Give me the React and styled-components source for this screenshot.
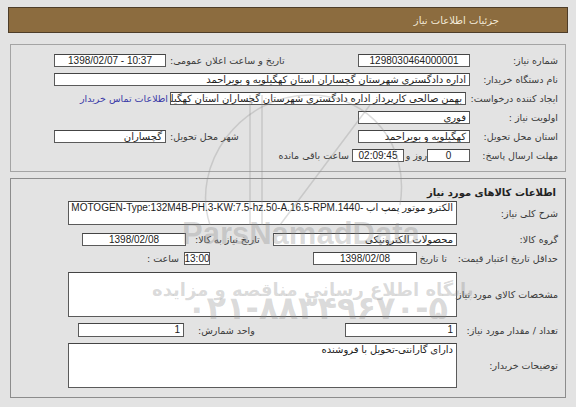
import styled, { createGlobalStyle } from "styled-components";

const GlobalStyle = createGlobalStyle`
  html, body {
    margin: 0;
    padding: 0;
    background: #e3e3e3;
  }
  body {
    font-family: "Liberation Sans", "DejaVu Sans", sans-serif;
    font-size: 10px;
    color: #333;
  }
`;

const Page = styled.div`
  position: relative;
  width: 576px;
  height: 407px;
  padding: 7px 8px 0 8px;
  box-sizing: border-box;
  direction: rtl;
  overflow: hidden;
`;

const Header = styled.div`
  height: 26px;
  box-sizing: border-box;
  background: #8c6c3f;
  border: 1px solid #4d3d29;
  color: #f3ead8;
  font-family: "DejaVu Sans", sans-serif;
  font-size: 10px;
  display: flex;
  align-items: center;
  padding-right: 68px;
`;

const Panel = styled.div`
  margin: ${(p) => p.$top}px 2px 0 2px;
  border: 1px solid ${(p) => p.$border || "#a4a4a4"};
  padding: ${(p) => p.$pad};
  display: flex;
  flex-direction: column;
  gap: ${(p) => p.$gap || 0}px;
`;

const Row = styled.div`
  display: flex;
  align-items: center;
  height: ${(p) => p.$h || 13}px;
  margin-top: ${(p) => p.$mt || 0}px;
`;

const Label = styled.div`
  width: ${(p) => (p.$w ? p.$w + "px" : "auto")};
  flex: ${(p) => (p.$grow ? 1 : "none")};
  text-align: ${(p) => (p.$end ? "left" : "right")};
  padding-left: ${(p) => p.$pl || 0}px;
  margin-right: ${(p) => p.$mr || 0}px;
  box-sizing: border-box;
  white-space: nowrap;
  font-family: "DejaVu Sans", sans-serif;
  font-size: 9.5px;
  color: #3a3a3a;
`;

const Field = styled.div`
  width: ${(p) => (p.$w ? p.$w + "px" : "auto")};
  flex: ${(p) => (p.$grow ? 1 : "none")};
  height: ${(p) => p.$h || 13}px;
  margin-right: ${(p) => p.$mr || 0}px;
  box-sizing: border-box;
  background: #fff;
  border: 1px solid #5a5a5a;
  border-top-color: #444;
  padding: 0 3px;
  display: flex;
  direction: ${(p) => (p.$ltr ? "ltr" : "rtl")};
  align-items: ${(p) => (p.$top ? "flex-start" : "center")};
  justify-content: ${(p) => (p.$center ? "center" : "flex-start")};
  white-space: nowrap;
  overflow: hidden;
  font-size: 10px;
  line-height: 12px;
  color: #222;
`;

const Spacer = styled.div`
  width: ${(p) => p.$w}px;
  flex: none;
`;

const Link = styled.a`
  margin-right: 2px;
  color: #3b3ba8;
  font-family: "DejaVu Sans", sans-serif;
  font-size: 9.5px;
  white-space: nowrap;
  text-decoration: none;
`;

const Heading = styled.div`
  height: 14px;
  display: flex;
  align-items: center;
  font-family: "DejaVu Sans", sans-serif;
  font-weight: bold;
  font-size: 10px;
  color: #222;
  margin-right: 2px;
`;

const Watermark = styled.div`
  position: absolute;
  inset: 0;
  pointer-events: none;
  direction: ltr;
`;

const MarkText = styled.div`
  position: absolute;
  left: ${(p) => p.$x}px;
  top: ${(p) => p.$y}px;
  font-family: ${(p) => p.$font || '"DejaVu Sans", sans-serif'};
  font-weight: bold;
  font-size: ${(p) => p.$size}px;
  letter-spacing: ${(p) => p.$ls || 0}px;
  color: rgba(140, 140, 140, 0.32);
  white-space: nowrap;
  direction: ${(p) => p.$dir || "ltr"};
`;

const Logo = styled.svg`
  position: absolute;
  left: 150px;
  top: 75px;
`;

export default function App() {
  return (
    <Page>
      <GlobalStyle />
      <Header>جزئیات اطلاعات نیاز</Header>

      <Panel $top={11} $pad="9px 7px 9px 43px" $gap={6}>
        <Row>
          <Label $w={88}>شماره نیاز:</Label>
          <Field $w={112} $center>1298030464000001</Field>
          <Label $grow $end $pl={4}>تاریخ و ساعت اعلان عمومی:</Label>
          <Field $w={112} $center $ltr>1398/02/07 - 10:37</Field>
        </Row>
        <Row>
          <Label $w={88}>نام دستگاه خریدار:</Label>
          <Field $grow>اداره دادگستری شهرستان گچساران استان کهگیلویه و بویراحمد</Field>
        </Row>
        <Row>
          <Label $w={92}>ایجاد کننده درخواست:</Label>
          <Field $w={296}>بهمن صالحی کارپرداز اداره دادگستری شهرستان گچساران استان کهگیلویه و بو</Field>
          <Link>اطلاعات تماس خریدار</Link>
        </Row>
        <Row>
          <Label $w={88}>اولویت نیاز :</Label>
          <Field $w={112}>فوری</Field>
        </Row>
        <Row>
          <Label $w={88}>استان محل تحویل:</Label>
          <Field $w={112}>کهگیلویه و بویراحمد</Field>
          <Label $grow $end $pl={4}>شهر محل تحویل:</Label>
          <Field $w={112}>گچساران</Field>
        </Row>
        <Row>
          <Label $w={88}>مهلت ارسال پاسخ:</Label>
          <Field $w={43} $center>0</Field>
          <Label $w={23}>روز و</Label>
          <Field $w={52} $center>02:09:45</Field>
          <Label $mr={3}>ساعت باقی مانده</Label>
        </Row>
      </Panel>

      <Panel $top={6} $border="#8c8c8c" $pad="6px 7px 9px 57px">
        <Heading>اطلاعات کالاهای مورد نیاز</Heading>
        <Row $h={24} $mt={2}>
          <Label $w={101}>شرح کلی نیاز:</Label>
          <Field $grow $h={24} $top>الکترو موتور پمپ اب -MOTOGEN-Type:132M4B-PH.3-KW:7.5-hz.50-A.16.5-RPM.1440</Field>
        </Row>
        <Row $mt={8}>
          <Label $w={101}>گروه کالا:</Label>
          <Field $w={184}>محصولات الکترونیکی</Field>
          <Label $w={87} $end $pl={9}>تاریخ نیاز به کالا:</Label>
          <Field $w={104} $center>1398/02/08</Field>
          <Spacer $w={12} />
        </Row>
        <Row $mt={6}>
          <Label $w={104}>حداقل تاریخ اعتبار قیمت:</Label>
          <Label $w={30} $mr={7}>تا تاریخ :</Label>
          <Field $w={104} $center>1398/02/08</Field>
          <Field $w={26} $mr={103} $center>13:00</Field>
          <Label $mr={5}>ساعت :</Label>
        </Row>
        <Row $h={45} $mt={7}>
          <Label $w={101}>مشخصات کالای مورد نیاز:</Label>
          <Field $grow $h={45} $top />
        </Row>
        <Row $h={14} $mt={6}>
          <Label $w={101}>تعداد / مقدار مورد نیاز:</Label>
          <Field $w={112} $h={14}>1</Field>
          <Label $grow $end $pl={14}>واحد شمارش:</Label>
          <Field $w={106} $h={14}>1</Field>
          <Spacer $w={10} />
        </Row>
        <Row $h={45} $mt={6}>
          <Label $w={101}>توضیحات خریدار:</Label>
          <Field $grow $h={45} $top>دارای گارانتی-تحویل با فروشنده</Field>
        </Row>
      </Panel>

      <Watermark>
        <Logo width="280" height="150" viewBox="0 0 280 150">
          <g fill="none" stroke="rgba(140,140,140,0.3)" strokeWidth="1.5">
            <path d="M60 150 C 40 90, 90 20, 160 20 C 220 20, 260 70, 250 130" />
            <path d="M100 20 L 100 150 M 112 20 L 112 150" />
            <path d="M130 150 L 220 30" />
          </g>
        </Logo>
        <MarkText $x={182} $y={216} $size={31} $font='"Liberation Sans", sans-serif'>ParsNamadData</MarkText>
        <MarkText $x={152} $y={279} $size={18} $dir="rtl">پایگاه اطلاع رسانی مناقصه و مزایده</MarkText>
        <MarkText $x={187} $y={289} $size={32} $ls={1} $dir="rtl">۰۲۱-۸۸۳۴۹۶۷۰-۵</MarkText>
      </Watermark>
    </Page>
  );
}
